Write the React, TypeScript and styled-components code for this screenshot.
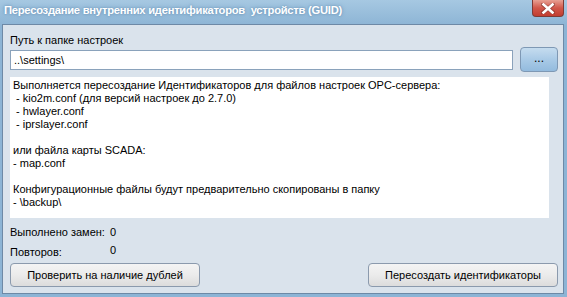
import React from 'react';
import styled, { createGlobalStyle } from 'styled-components';

const GlobalStyle = createGlobalStyle`
  html, body {
    margin: 0;
    padding: 0;
    width: 567px;
    height: 297px;
    overflow: hidden;
    background: #8fb6d6;
  }
  * {
    box-sizing: border-box;
  }
`;

const Window = styled.div`
  width: 567px;
  height: 297px;
  display: flex;
  flex-direction: column;
  background: linear-gradient(#a6c8e2, #8cb4d5 26px, #8cb4d5);
  padding: 0 3px 3px 2px;
  font-family: 'Liberation Sans', Arial, sans-serif;
`;

const TitleBar = styled.div`
  height: 24px;
  display: flex;
  align-items: flex-start;
  justify-content: space-between;
  flex-shrink: 0;
`;

const Title = styled.div`
  padding: 4px 0 0 2px;
  font-family: 'Liberation Sans', Arial, sans-serif;
  font-weight: bold;
  font-size: 11.2px;
  letter-spacing: -0.25px;
  color: #ffffff;
  white-space: pre;
  text-shadow: 0 0 4px #6f98bb, 0 0 2px #6f98bb;
`;

const CloseButton = styled.div`
  width: 32px;
  height: 17px;
  display: flex;
  align-items: center;
  justify-content: center;
  background: linear-gradient(#e8a093, #d1574a 50%, #c23d30);
  border: 1px solid #7e3a35;
  border-top: none;
  border-radius: 0 0 4px 4px;
`;

const Client = styled.div`
  flex: 1;
  display: flex;
  flex-direction: column;
  background: #dae3ec;
  border: 1px solid #6d89a6;
  padding: 6px 5px 6px 7px;
  font-size: 11px;
  color: #000;
`;

const Label = styled.div`
  height: 16px;
  padding-top: 2px;
  line-height: 14px;
`;

const PathRow = styled.div`
  display: flex;
  align-items: center;
  gap: 7px;
`;

const PathInput = styled.div`
  width: 504px;
  height: 20px;
  background: #fff;
  border: 1px solid #8aa2bb;
  padding: 2px 3px;
  line-height: 15px;
`;

const BrowseButton = styled.div`
  width: 38px;
  height: 25px;
  border: 1px solid #7e98b4;
  border-radius: 4px;
  background: linear-gradient(#c5dcef, #a9cae6 50%, #93bbde);
  display: flex;
  align-items: center;
  justify-content: center;
  font-size: 12px;
  padding-bottom: 3px;
`;

const InfoBox = styled.div`
  width: 539px;
  height: 141px;
  margin-top: 5px;
  background: #fff;
  padding: 2px 3px;
  line-height: 13px;
  white-space: pre;
`;

const Stats = styled.div`
  display: flex;
  flex-direction: column;
  margin-top: 4px;
`;

const StatRow = styled.div`
  display: flex;
  align-items: center;
  height: 20px;
`;

const StatLabel = styled.span`
  width: 100px;
  flex-shrink: 0;
`;

const StatValue = styled.span<{ $shift?: number }>`
  position: relative;
  top: ${(p) => p.$shift ?? 0}px;
`;

const ButtonRow = styled.div`
  display: flex;
  justify-content: space-between;
  margin-top: 1px;
`;

const Button = styled.div`
  width: 190px;
  height: 24px;
  border: 1px solid #8b9aad;
  border-radius: 4px;
  background: linear-gradient(#f4f4f4, #ebebeb 50%, #dcdcdc);
  display: flex;
  align-items: center;
  justify-content: center;
  padding-bottom: 1px;
`;

const infoText = `Выполняется пересоздание Идентификаторов для файлов настроек OPC-сервера:
 - kio2m.conf (для версий настроек до 2.7.0)
 - hwlayer.conf
 - iprslayer.conf

или файла карты SCADA:
- map.conf

Конфигурационные файлы будут предварительно скопированы в папку
- \\backup\\`;

const App = () => {
  return (
    <>
      <GlobalStyle />
      <Window>
        <TitleBar>
          <Title>Пересоздание внутренних идентификаторов  устройств (GUID)</Title>
          <CloseButton>
            <svg width="14" height="11" viewBox="0 0 14 11">
              <path
                d="M2 1.5 L12 9.5 M12 1.5 L2 9.5"
                stroke="#6b2a25"
                strokeWidth="4"
                strokeLinecap="square"
                opacity="0.5"
              />
              <path
                d="M2.5 1.5 L11.5 9.5 M11.5 1.5 L2.5 9.5"
                stroke="#ffffff"
                strokeWidth="2.6"
                strokeLinecap="square"
              />
            </svg>
          </CloseButton>
        </TitleBar>
        <Client>
          <Label>Путь к папке настроек</Label>
          <PathRow>
            <PathInput>..\settings\</PathInput>
            <BrowseButton>...</BrowseButton>
          </PathRow>
          <InfoBox>{infoText}</InfoBox>
          <Stats>
            <StatRow>
              <StatLabel>Выполнено замен:</StatLabel>
              <StatValue>0</StatValue>
            </StatRow>
            <StatRow>
              <StatLabel>Повторов:</StatLabel>
              <StatValue $shift={-2}>0</StatValue>
            </StatRow>
          </Stats>
          <ButtonRow>
            <Button>Проверить на наличие дублей</Button>
            <Button>Пересоздать идентификаторы</Button>
          </ButtonRow>
        </Client>
      </Window>
    </>
  );
};

export default App;
